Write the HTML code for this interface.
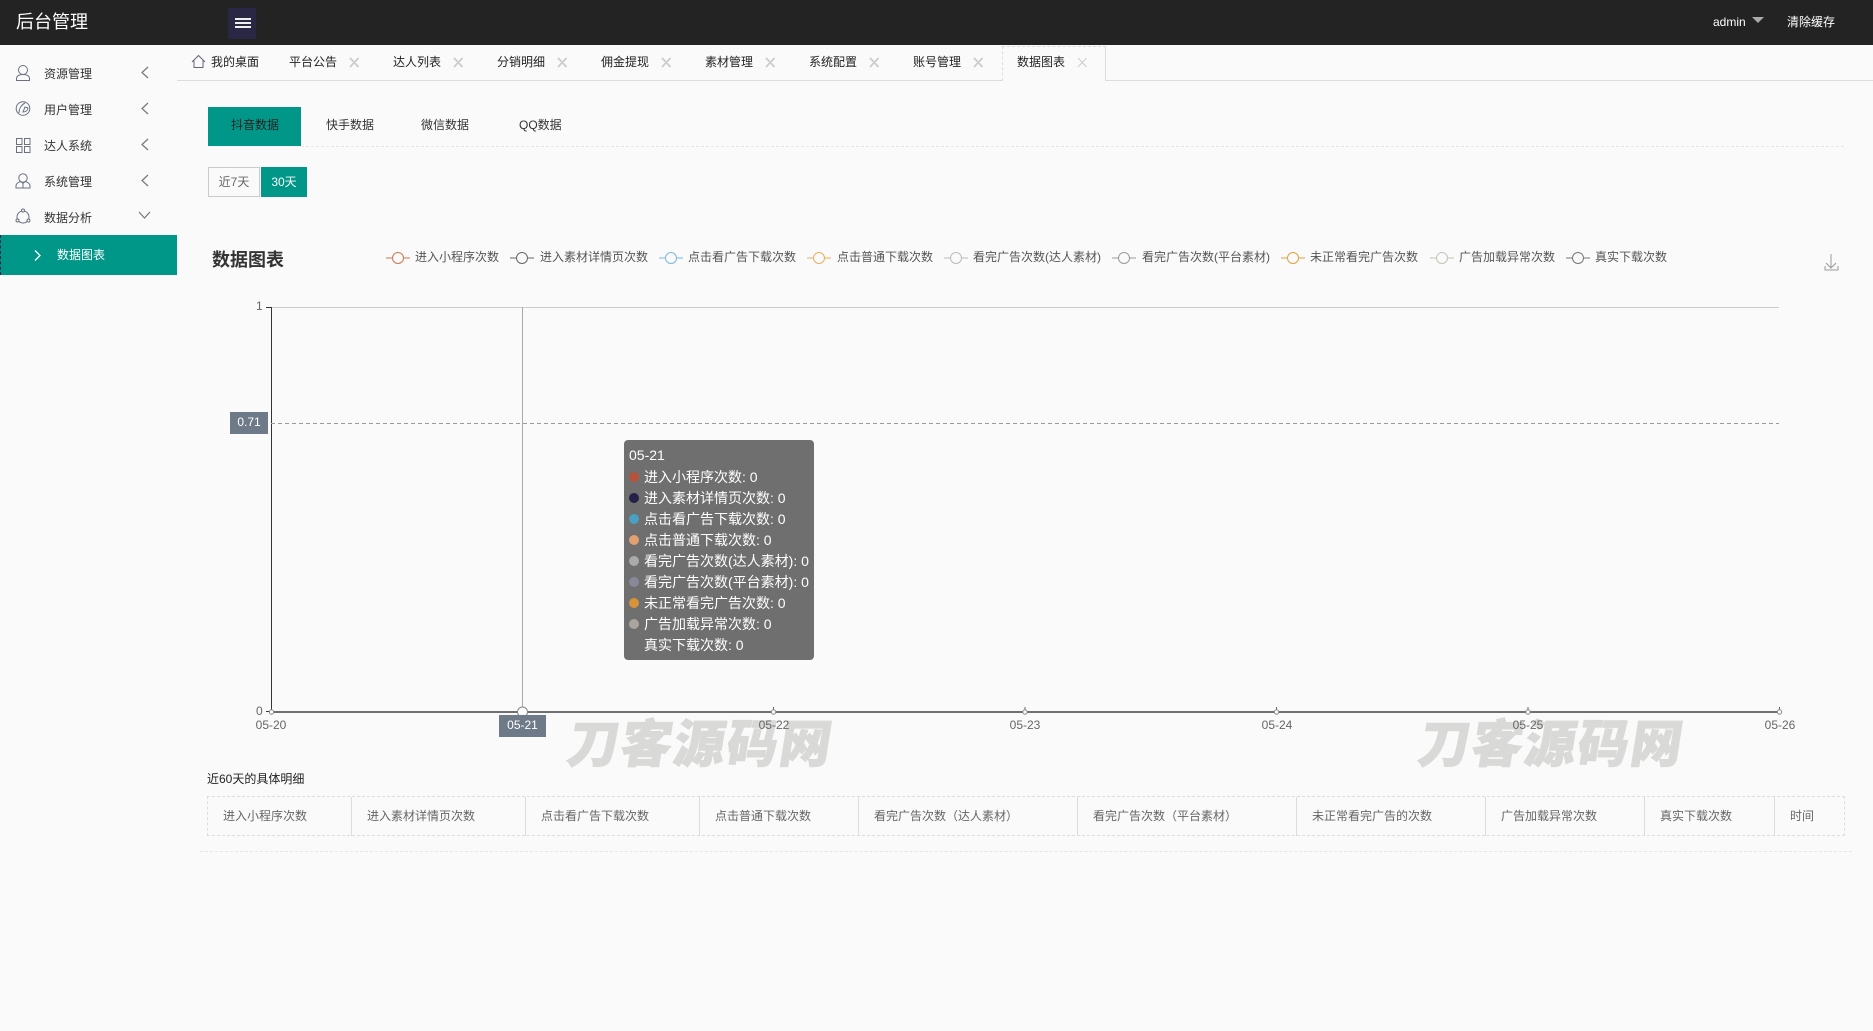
<!DOCTYPE html>
<html lang="zh-CN"><head><meta charset="utf-8"><title>后台管理</title>
<style>
*{box-sizing:border-box;margin:0;padding:0}
html,body{width:1873px;height:1031px;overflow:hidden;background:#fafafa;font-family:"Liberation Sans","Noto Sans CJK SC",sans-serif;font-size:12px;color:#333}
.a{position:absolute;white-space:nowrap;line-height:16px}
svg{position:absolute;overflow:visible}
.nav{color:#333}
.tab{color:#222;top:54px}
.x{color:#ccc;top:62px}
.lg{color:#555;top:249px}
.th{color:#666;top:808px}
.sep{position:absolute;top:797px;height:39px;width:1px;background:#ddd}
.tt{color:#fff;font-size:14px;line-height:21px;height:21px;position:absolute;left:644px;white-space:nowrap}
.dot{position:absolute;left:629px;width:10px;height:10px;border-radius:50%}
.ax{color:#666;top:717px;width:60px;text-align:center}
.wm{position:absolute;top:712px;font-size:51px;line-height:56px;font-weight:900;font-style:normal;color:#d9dad8;-webkit-text-stroke:1px #d9dad8;white-space:nowrap;letter-spacing:2px;font-family:"Noto Sans CJK SC",sans-serif;transform:skewX(-9deg)}
</style></head><body>
<div class="a" style="left:0;top:0;width:1873px;height:45px;background:#232323"></div>
<div class="a" style="left:16px;top:10px;color:#fff;font-size:18px;line-height:24px">后台管理</div>
<div class="a" style="left:228px;top:8px;width:28px;height:31px;background:#2a2745"></div>
<div class="a" style="left:235px;top:18px;width:16px;height:1.500px;background:#eee"></div>
<div class="a" style="left:235px;top:22px;width:16px;height:1.500px;background:#eee"></div>
<div class="a" style="left:235px;top:26px;width:16px;height:1.500px;background:#eee"></div>
<div class="a" style="left:1713px;top:14px;color:#fff">admin</div>
<div class="a" style="left:1752px;top:17px;width:0;height:0;border-left:6px solid transparent;border-right:6px solid transparent;border-top:6px solid #aaa"></div>
<div class="a" style="left:1787px;top:14px;color:#fff">清除缓存</div>

<!-- Sidebar -->
<svg style="left:0;top:0" width="177" height="240" fill="none" stroke="#6a7280" stroke-width="1">
<circle cx="23" cy="70" r="4.500"/><path d="M16.500 80.500v-1.500c0-3 2.500-4.500 6.500-4.500s6.500 1.500 6.500 4.500v1.500z"/>
<circle cx="23" cy="108.500" r="6.800"/><path d="M19 113c0-4 2-8 6-10M23 112c3 0 5-2 5-4l-3-1z"/>
<rect x="16.500" y="138.500" width="5.500" height="6"/><rect x="24.500" y="138.500" width="5.500" height="6"/><rect x="16.500" y="146.500" width="5.500" height="6"/><rect x="24.500" y="146.500" width="5.500" height="6"/>
<circle cx="23" cy="178" r="4.200"/><path d="M16 188v-2c0-2.500 2.500-4 5-4.500l2 2 2-2c2.500.5 5 2 5 4.500v2zM23 184v4"/>
<circle cx="23" cy="217" r="6"/><circle cx="23" cy="210.500" r="1.500" fill="#fafafa"/><circle cx="17.500" cy="220.500" r="1.500" fill="#fafafa"/><circle cx="28.500" cy="220.500" r="1.500" fill="#fafafa"/>
<g stroke="#777" stroke-width="1.200"><path d="M148 67l-6 5.500 6 5.500M148 103l-6 5.500 6 5.500M148 139l-6 5.500 6 5.500M148 175l-6 5.500 6 5.500M139 212l5.500 6 5.500-6"/></g>
</svg>
<div class="a nav" style="left:44px;top:66px">资源管理</div>
<div class="a nav" style="left:44px;top:102px">用户管理</div>
<div class="a nav" style="left:44px;top:138px">达人系统</div>
<div class="a nav" style="left:44px;top:174px">系统管理</div>
<div class="a nav" style="left:44px;top:210px">数据分析</div>
<div class="a" style="left:0;top:235px;width:177px;height:40px;background:#009688;border-left:1px dashed #2a2745"></div>
<svg style="left:0;top:0" width="60" height="270" fill="none" stroke="#fff" stroke-width="1.300"><path d="M35 250.500l5 5-5 5"/></svg>
<div class="a" style="left:57px;top:247px;color:#fff">数据图表</div>

<!-- Tabs -->
<div class="a" style="left:177px;top:80px;width:1696px;height:1px;background:#ddd"></div>
<svg style="left:0;top:0" width="210" height="70" fill="none" stroke="#667" stroke-width="1"><path d="M192 62l6.500-6.500 6.500 6.500M194 60.500v7h9v-7"/></svg>
<div class="a tab" style="left:211px">我的桌面</div>
<div class="a tab" style="left:289px">平台公告</div>
<div class="a tab" style="left:393px">达人列表</div>
<div class="a tab" style="left:497px">分销明细</div>
<div class="a tab" style="left:601px">佣金提现</div>
<div class="a tab" style="left:705px">素材管理</div>
<div class="a tab" style="left:809px">系统配置</div>
<div class="a tab" style="left:913px">账号管理</div>
<div class="a" style="left:1002px;top:46px;width:104px;height:35px;background:#fafafa;border:1px solid #ddd;border-top-style:dashed;border-left-style:dashed;border-bottom:none"></div>
<div class="a tab" style="left:1017px">数据图表</div>
<svg style="left:0;top:0" width="1100" height="80" fill="none" stroke="#ccc" stroke-width="1.800">
<path d="M350 58l8.500 9m0-9l-8.500 9M454 58l8.500 9m0-9l-8.500 9M558 58l8.500 9m0-9l-8.500 9M662 58l8.500 9m0-9l-8.500 9M766 58l8.500 9m0-9l-8.500 9M870 58l8.500 9m0-9l-8.500 9M974 58l8.500 9m0-9l-8.500 9"/>
<path stroke-width="1" d="M1078 58l8.500 9m0-9l-8.500 9"/></svg>

<!-- Sub tabs -->
<div class="a" style="left:208px;top:107px;width:93px;height:39px;background:#009688"></div>
<div class="a" style="left:231px;top:117px;color:#222">抖音数据</div>
<div class="a" style="left:326px;top:117px;color:#333">快手数据</div>
<div class="a" style="left:421px;top:117px;color:#333">微信数据</div>
<div class="a" style="left:519px;top:117px;color:#333">QQ数据</div>
<div class="a" style="left:301px;top:146px;width:1543px;height:0;border-top:1px dashed #e6e6e6"></div>
<div class="a" style="left:208px;top:167px;width:52px;height:30px;border:1px solid #ccc;line-height:28px;text-align:center;color:#666">近7天</div>
<div class="a" style="left:261px;top:167px;width:46px;height:30px;background:#009688;line-height:30px;text-align:center;color:#fff">30天</div>

<!-- Legend -->
<div class="a" style="left:212px;top:248px;font-size:18px;line-height:24px;font-weight:bold;color:#333">数据图表</div>
<svg style="left:0;top:0" width="1873" height="300" fill="#fafafa" stroke-width="1">
<g stroke="#c8784e"><path d="M386 258h24"/><circle cx="398" cy="258" r="5.500"/></g>
<g stroke="#666"><path d="M510 258h24"/><circle cx="522" cy="258" r="5.500"/></g>
<g stroke="#7ab8dd"><path d="M659 258h24"/><circle cx="671" cy="258" r="5.500"/></g>
<g stroke="#e8b060"><path d="M807 258h24"/><circle cx="819" cy="258" r="5.500"/></g>
<g stroke="#bbb"><path d="M944 258h24"/><circle cx="956" cy="258" r="5.500"/></g>
<g stroke="#999"><path d="M1112 258h24"/><circle cx="1124" cy="258" r="5.500"/></g>
<g stroke="#e0a040"><path d="M1281 258h24"/><circle cx="1293" cy="258" r="5.500"/></g>
<g stroke="#c4c4b8"><path d="M1430 258h24"/><circle cx="1442" cy="258" r="5.500"/></g>
<g stroke="#777"><path d="M1566 258h24"/><circle cx="1578" cy="258" r="5.500"/></g>
<g fill="none" stroke="#999" stroke-width="1"><path d="M1831 254v14M1826 263l5 5 5-5M1825 266v4h13v-4"/></g>
</svg>
<div class="a lg" style="left:415px">进入小程序次数</div>
<div class="a lg" style="left:540px">进入素材详情页次数</div>
<div class="a lg" style="left:688px">点击看广告下载次数</div>
<div class="a lg" style="left:837px">点击普通下载次数</div>
<div class="a lg" style="left:973px">看完广告次数(达人素材)</div>
<div class="a lg" style="left:1142px">看完广告次数(平台素材)</div>
<div class="a lg" style="left:1310px">未正常看完广告次数</div>
<div class="a lg" style="left:1459px">广告加载异常次数</div>
<div class="a lg" style="left:1595px">真实下载次数</div>

<!-- Watermarks -->
<div class="wm" style="left:569px">刀客源码网</div>
<div class="wm" style="left:1420px">刀客源码网</div>

<!-- Chart -->
<svg style="left:0;top:0" width="1873" height="760" fill="none">
<path d="M271 307.500H1779" stroke="#ccc"/>
<path d="M271.500 307V712M266 307.500h5M266 711.500h5" stroke="#333"/>
<path d="M522.500 307V712" stroke="#aaa"/>
<path d="M271 423.500H1779" stroke="#999" stroke-dasharray="4 3"/>
<path d="M271 712H1780" stroke="#6e7070" stroke-width="2"/>
<path d="M773.500 707v4M1025 707v4M1276.500 707v4M1528 707v4M1779.500 707v4" stroke="#666"/>
<g stroke="#888" fill="#fafafa" stroke-width="1"><circle cx="271.500" cy="712" r="2.200"/><circle cx="522.500" cy="712" r="5"/><circle cx="773.500" cy="712" r="2.200"/><circle cx="1025" cy="712" r="2.200"/><circle cx="1276.500" cy="712" r="2.200"/><circle cx="1528" cy="712" r="2.200"/><circle cx="1779.500" cy="712" r="2.200"/></g>
</svg>
<div class="a" style="left:256px;top:298px;color:#666">1</div>
<div class="a" style="left:256px;top:703px;color:#666">0</div>
<div class="a" style="left:230px;top:412px;width:38px;height:22px;background:#6e7a88;color:#fff;line-height:20px;text-align:center">0.71</div>
<div class="a ax" style="left:241px">05-20</div>
<div class="a" style="left:499px;top:715px;width:47px;height:22px;background:#6e7a88;color:#fff;line-height:20px;text-align:center">05-21</div>
<div class="a ax" style="left:744px">05-22</div>
<div class="a ax" style="left:995px">05-23</div>
<div class="a ax" style="left:1247px">05-24</div>
<div class="a ax" style="left:1498px">05-25</div>
<div class="a ax" style="left:1750px">05-26</div>

<!-- Tooltip -->
<div class="a" style="left:624px;top:440px;width:190px;height:220px;background:#6f6f6f;border-radius:4px"></div>
<div class="tt" style="left:629px;top:445px">05-21</div>
<div class="dot" style="top:472px;background:#b5533a"></div><div class="tt" style="top:467px">进入小程序次数: 0</div>
<div class="dot" style="top:493px;background:#252048"></div><div class="tt" style="top:488px">进入素材详情页次数: 0</div>
<div class="dot" style="top:514px;background:#4aa0c0"></div><div class="tt" style="top:509px">点击看广告下载次数: 0</div>
<div class="dot" style="top:535px;background:#e0a070"></div><div class="tt" style="top:530px">点击普通下载次数: 0</div>
<div class="dot" style="top:556px;background:#aaa"></div><div class="tt" style="top:551px">看完广告次数(达人素材): 0</div>
<div class="dot" style="top:577px;background:#889"></div><div class="tt" style="top:572px">看完广告次数(平台素材): 0</div>
<div class="dot" style="top:598px;background:#d8923a"></div><div class="tt" style="top:593px">未正常看完广告次数: 0</div>
<div class="dot" style="top:619px;background:#aaa49c"></div><div class="tt" style="top:614px">广告加载异常次数: 0</div>
<div class="tt" style="top:635px">真实下载次数: 0</div>

<!-- Table -->
<div class="a" style="left:207px;top:771px;color:#222">近60天的具体明细</div>
<div class="a" style="left:207px;top:796px;width:1638px;height:40px;border:1px dashed #ddd"></div>
<div class="sep" style="left:351px"></div><div class="sep" style="left:525px"></div><div class="sep" style="left:699px"></div><div class="sep" style="left:858px"></div><div class="sep" style="left:1077px"></div><div class="sep" style="left:1296px"></div><div class="sep" style="left:1485px"></div><div class="sep" style="left:1644px"></div><div class="sep" style="left:1774px"></div>
<div class="a th" style="left:223px">进入小程序次数</div>
<div class="a th" style="left:367px">进入素材详情页次数</div>
<div class="a th" style="left:541px">点击看广告下载次数</div>
<div class="a th" style="left:715px">点击普通下载次数</div>
<div class="a th" style="left:874px">看完广告次数（达人素材）</div>
<div class="a th" style="left:1093px">看完广告次数（平台素材）</div>
<div class="a th" style="left:1312px">未正常看完广告的次数</div>
<div class="a th" style="left:1501px">广告加载异常次数</div>
<div class="a th" style="left:1660px">真实下载次数</div>
<div class="a th" style="left:1790px">时间</div>
<div class="a" style="left:200px;top:851px;width:1652px;height:0;border-top:1px dashed #e6e6e6"></div>
</body></html>
